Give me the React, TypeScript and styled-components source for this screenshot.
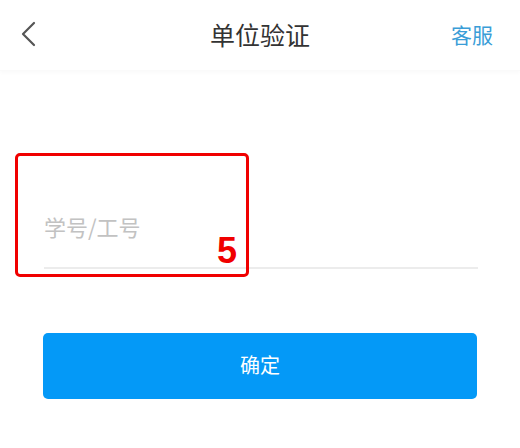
import styled, { createGlobalStyle } from 'styled-components';

const GlobalStyle = createGlobalStyle`
  html, body {
    margin: 0;
    padding: 0;
    background: #fff;
    font-family: "Noto Sans CJK SC", "Noto Sans", sans-serif;
  }
`;

const Page = styled.div`
  width: 520px;
  height: 448px;
  background: #fff;
  position: relative;
  overflow: hidden;
`;

const Header = styled.div`
  height: 70px;
  display: grid;
  grid-template-columns: 80px 1fr 80px;
  align-items: center;
  box-shadow: 0 2px 4px rgba(0, 0, 0, 0.025);
  border-bottom: 1px solid #fafafa;
`;

const BackButton = styled.div`
  display: flex;
  align-items: center;
  padding-left: 20px;
  padding-bottom: 2px;
`;

const Title = styled.div`
  text-align: center;
  font-size: 25px;
  color: #333;
  padding-bottom: 2px;
`;

const Service = styled.div`
  text-align: right;
  padding-right: 27px;
  font-size: 21px;
  color: #3a9dd7;
  padding-bottom: 2px;
`;

const Form = styled.div`
  position: relative;
  padding: 128px 42px 0 44px;
`;

const Field = styled.div`
  height: 70px;
  display: flex;
  align-items: center;
  border-bottom: 2px solid #ececec;
  box-sizing: border-box;
`;

const Input = styled.input`
  border: none;
  outline: none;
  width: 100%;
  font-family: "Noto Sans CJK SC", sans-serif;
  font-size: 22px;
  color: #333;
  padding: 0;
  margin-top: -14px;
  background: transparent;
  &::placeholder {
    color: #c2c2c2;
  }
`;

const Submit = styled.button`
  margin-top: 64px;
  margin-left: -1px;
  width: 434px;
  height: 66px;
  border: none;
  border-radius: 5px;
  background: #0499f7;
  color: #fff;
  font-family: "Noto Sans CJK SC", sans-serif;
  font-size: 20px;
  padding-bottom: 4px;
  cursor: pointer;
`;

const Marker = styled.div`
  position: absolute;
  left: 15px;
  top: 82px;
  width: 234px;
  height: 124px;
  border: 3px solid #f00000;
  border-radius: 5px;
  box-sizing: border-box;
`;

const MarkerNumber = styled.span`
  position: absolute;
  right: 9px;
  bottom: 5px;
  font-family: "Liberation Sans", Arial, sans-serif;
  font-weight: 700;
  font-size: 36px;
  line-height: 1;
  color: #f00000;
`;

const App = () => {
  return (
    <Page>
      <GlobalStyle />
      <Header>
        <BackButton>
          <svg width="16" height="26" viewBox="0 0 16 26">
            <path d="M14 2 L3 13 L14 24" fill="none" stroke="#555" strokeWidth="2.2" strokeLinecap="round" strokeLinejoin="round" />
          </svg>
        </BackButton>
        <Title>单位验证</Title>
        <Service>客服</Service>
      </Header>
      <Form>
        <Field>
          <Input placeholder="学号/工号" />
        </Field>
        <Submit>确定</Submit>
        <Marker>
          <MarkerNumber>5</MarkerNumber>
        </Marker>
      </Form>
    </Page>
  );
};

export default App;
